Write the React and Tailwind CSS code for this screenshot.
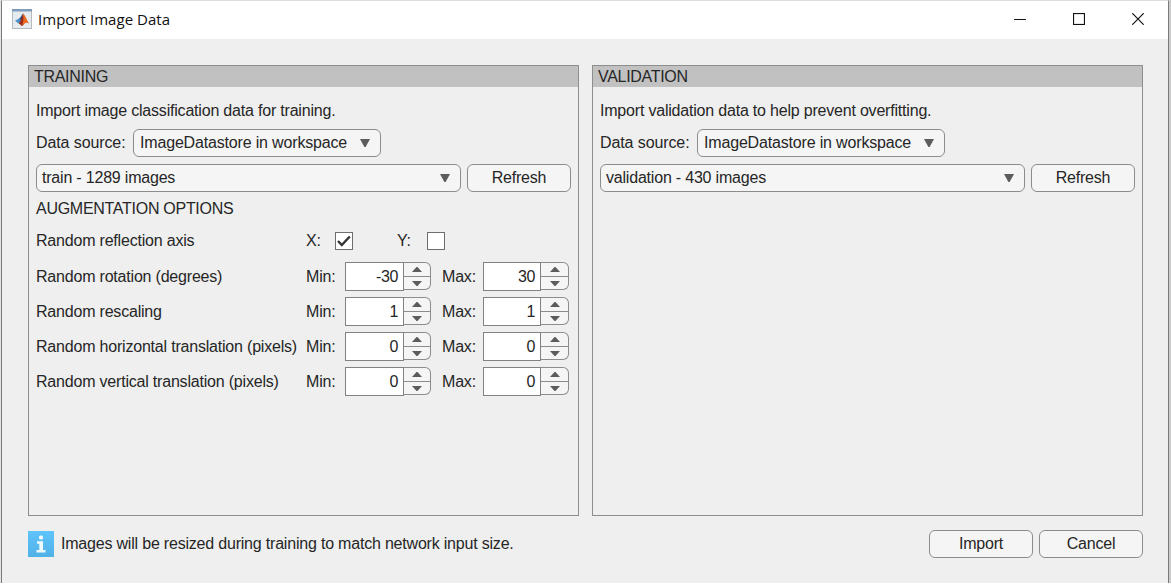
import React from "react";

function MatlabIcon() {
  return (
    <svg width="20" height="20" viewBox="0 0 20 20" className="block shrink-0">
      <rect x="0.5" y="0.5" width="19" height="19" fill="#e6ebf0" stroke="#b3bac1" />
      <rect x="0" y="0" width="20" height="2.500" fill="#7f9dba" />
      <path d="M3 11.800L7 9.600l2.600 2.200-3 2.800z" fill="#4a90c8" />
      <path d="M7 9.600c1.600-.4 2.400-3.600 4.200-5L9.600 12z" fill="#28508a" />
      <path d="M11.200 4.600c-1.200 2.600-1.800 7.400-4.600 10 1.600-.2 2.200 2.400 3.200 2.400 1.600-.4 2.400-2.900 3.400-3.600z" fill="#9c2a18" />
      <path d="M11.200 4.600c2 1.400 3.600 6.600 6 10.200-2.400-1.800-4-1.400-7.400 2.200 1.700-3.500 2-8.400 1.400-12.400z" fill="#ea6a20" />
    </svg>
  );
}

function Chevron() {
  return (
    <svg width="10" height="8" viewBox="0 0 10 8" className="block shrink-0">
      <path d="M0 0h10L5.600 8H4.400z" fill="#5c5c5c" />
    </svg>
  );
}

function Select({ className, children }) {
  return (
    <div className={"flex h-7 items-center justify-between rounded-[6px] border border-[#8c8c8c] bg-[#f5f5f5] pr-[10px] " + className}>
      <span>{children}</span>
      <Chevron />
    </div>
  );
}

function Button({ children }) {
  return (
    <button className="flex h-7 w-[104px] items-center justify-center rounded-[6px] border border-[#8c8c8c] bg-[#f5f5f5]">
      <span>{children}</span>
    </button>
  );
}

function Spinner({ value, inputClass }) {
  return (
    <div className="flex h-[29px] w-[86px]">
      <div className={"flex items-center justify-end border border-[#828282] bg-white pr-[5px] " + inputClass}>
        <span className="tracking-[-0.4px]">{value}</span>
      </div>
      <div className="flex h-[28px] flex-1 flex-col rounded-r-[6px] border border-l-0 border-[#8c8c8c] bg-[#f5f5f5]">
        <div className="flex h-[14px] items-center justify-center border-b border-[#8c8c8c]">
          <svg width="10" height="5" viewBox="0 0 10 5"><path d="M0 5h10L5.500 0h-1z" fill="#5c5c5c" /></svg>
        </div>
        <div className="flex flex-1 items-center justify-center">
          <svg width="10" height="5" viewBox="0 0 10 5"><path d="M0 0h10L5.500 5h-1z" fill="#5c5c5c" /></svg>
        </div>
      </div>
    </div>
  );
}

function Checkbox({ checked }) {
  return (
    <div className="flex size-[18px] items-center justify-center border border-[#6e6e6e] bg-white">
      {checked && (
        <svg width="14" height="12" viewBox="0 0 14 12">
          <path d="M1 6l3.800 4L12.800 1.500" fill="none" stroke="#333" strokeWidth="2.400" />
        </svg>
      )}
    </div>
  );
}

function Panel({ title, description, item, children }) {
  return (
    <section className="flex h-[451px] w-[551px] flex-col border border-[#8e8e8e]">
      <h2 className="flex h-[21px] items-center bg-[#c1c1c1] pl-[5px]">
        <span className="tracking-[-0.3px]">{title}</span>
      </h2>
      <div className="flex flex-col pl-[7px]">
        <p className="mt-[12px] flex h-6 items-center"><span>{description}</span></p>
        <div className="mt-[6px] flex h-7 items-center">
          <div className="w-[97px]"><span className="tracking-[-0.1px]">Data source:</span></div>
          <Select className="w-[248px] pl-[6px] tracking-[-0.17px]">ImageDatastore in workspace</Select>
        </div>
        <div className="mt-[7px] flex h-7 gap-[6px]">
          <Select className="w-[425px] pl-[5px]">{item}</Select>
          <Button>Refresh</Button>
        </div>
        {children}
      </div>
    </section>
  );
}

const rows = [
  { label: "Random rotation (degrees)", min: "-30", max: "30" },
  { label: "Random rescaling", min: "1", max: "1" },
  { label: "Random horizontal translation (pixels)", min: "0", max: "0" },
  { label: "Random vertical translation (pixels)", min: "0", max: "0" },
];

export default function App() {
  return (
    <div className="flex h-[584px] w-[1171px] overflow-hidden whitespace-nowrap bg-white font-['Liberation_Sans',Arial,sans-serif] text-[16px] leading-5 tracking-[-0.2px] text-[#262626]">
      <div className="h-[583px] w-px bg-[#e4e4e4]" />
      <main className="flex h-[583px] w-[1168px] flex-col border-x border-t border-x-[#7a7a7a] border-t-[#dedede] bg-[#efefef]">
        <header className="flex h-[38px] items-center justify-between bg-white pl-[10px] pr-[24px]">
          <div className="flex items-center gap-[6px] pb-[2px]">
            <MatlabIcon />
            <h1 className="font-['Open_Sans','Noto_Sans',sans-serif] text-[15px] tracking-[0.04px] text-[#111]">Import Image Data</h1>
          </div>
          <div className="flex items-center gap-[47px] pb-[2px]">
            <svg width="12" height="12" viewBox="0 0 12 12"><path d="M0 6.500h12" stroke="#111" /></svg>
            <svg width="12" height="12" viewBox="0 0 12 12"><rect x=".5" y=".5" width="11" height="11" fill="none" stroke="#111" strokeWidth="1.200" /></svg>
            <svg width="12" height="12" viewBox="0 0 12 12"><path d="M.3.300l11.400 11.400M11.700.300L.3 11.700" stroke="#111" strokeWidth="1.200" /></svg>
          </div>
        </header>
        <div className="mt-[26px] flex gap-[13px] pl-[26px]">
          <Panel title="TRAINING" description="Import image classification data for training." item="train - 1289 images">
            <h3 className="mt-[6px] flex h-[22px] items-center"><span className="tracking-[-0.28px]">AUGMENTATION OPTIONS</span></h3>
            <div className="mt-3 flex h-[18px] items-center">
              <div className="w-[270px]"><span>Random reflection axis</span></div>
              <div className="w-[29px]">X:</div>
              <Checkbox checked />
              <div className="ml-[44px] w-[30px]">Y:</div>
              <Checkbox />
            </div>
            <div className="mt-3 flex flex-col gap-[6px]">
              {rows.map((row) => (
                <div key={row.label} className="flex h-[29px] items-center">
                  <div className="w-[270px]"><span>{row.label}</span></div>
                  <div className="w-[39px]"><span>Min:</span></div>
                  <Spinner value={row.min} inputClass="w-[59px]" />
                  <div className="ml-[11px] w-[41px]"><span>Max:</span></div>
                  <Spinner value={row.max} inputClass="w-[58px]" />
                </div>
              ))}
            </div>
          </Panel>
          <Panel title="VALIDATION" description="Import validation data to help prevent overfitting." item="validation - 430 images" />
        </div>
        <footer className="mt-[14px] flex items-center pl-[26px]">
          <svg width="26" height="26" viewBox="0 0 26 26">
            <defs>
              <linearGradient id="info" x1="0" y1="0" x2="0" y2="1"><stop stopColor="#5ec4fb" /><stop offset="1" stopColor="#50b1e7" /></linearGradient>
            </defs>
            <rect width="26" height="26" fill="url(#info)" />
            <rect x="11" y="4.500" width="4" height="4" rx="1.500" fill="#eefaff" />
            <path d="M9 10.200h6v8.800h2.500v2.500H8.500V19h2.800v-6.300H9z" fill="#eefaff" />
          </svg>
          <p className="ml-[7px] flex-1"><span>Images will be resized during training to match network input size.</span></p>
          <div className="flex gap-[6px] pr-[25px]">
            <Button>Import</Button>
            <Button>Cancel</Button>
          </div>
        </footer>
      </main>
      <div className="h-[583px] w-[2px] bg-[#cccccc]" />
    </div>
  );
}
